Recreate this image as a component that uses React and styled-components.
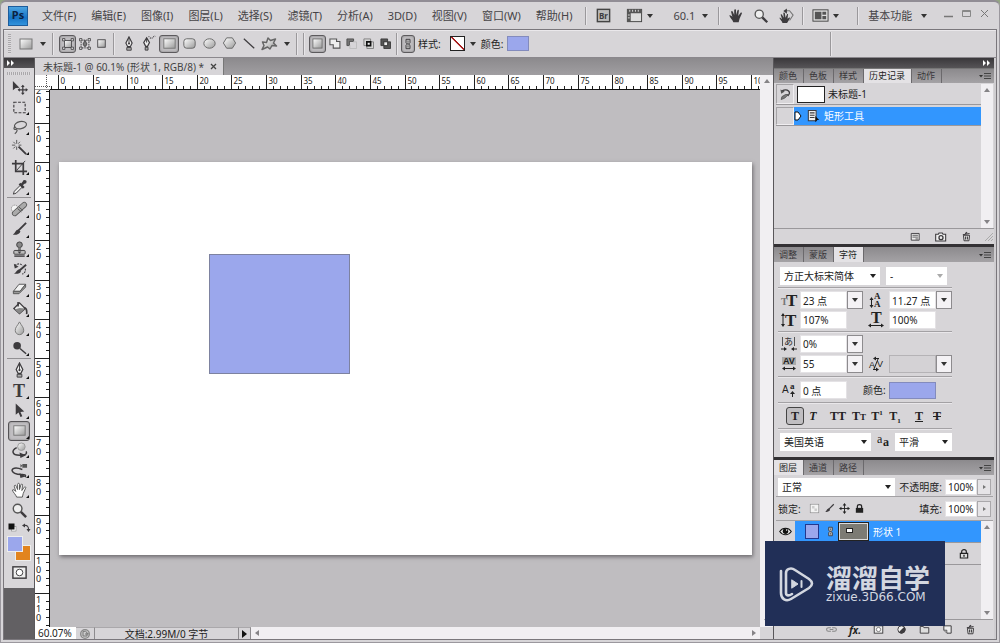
import React, { useEffect, useRef, useState } from 'react'
import styled, { createGlobalStyle, css } from 'styled-components'

const GlobalStyle = createGlobalStyle`
  *, *::before, *::after { box-sizing: border-box; }
  html, body, #root { height: 100%; }
  body {
    margin: 0;
    background: #93a682;
    color: #333;
    font-family: "Noto Sans", "Noto Sans CJK SC", sans-serif;
    font-size: 10px;
    line-height: 14px;
  }
  button, input, select { font: inherit; color: inherit; margin: 0; padding: 0; border: 0; border-radius: 0; }
  button { background: none; cursor: pointer; }
  svg { display: block; flex: none; }
`

/* ---------- icons ---------- */

const dark = '#3d3b3e'
const line = { fill: 'none', stroke: dark, strokeWidth: 1.2 }

const icons = {
  move: <><path d="M2 2v10l3-2.400 4-.4z" fill={dark} /><path d="M12.500 7v9M8 11.500h9" stroke={dark} strokeWidth="1.300" /><path d="M12.500 6l2 2.400h-4zM12.500 17l2-2.400h-4zM7 11.500l2.400-2v4zM18 11.500l-2.400-2v4z" fill={dark} /></>,
  marquee: <rect x="3" y="3.500" width="12" height="11" {...line} strokeDasharray="3 1.500" />,
  lasso: <><ellipse cx="10" cy="6.500" rx="6.500" ry="3.800" {...line} stroke="#555" transform="rotate(-12 10 6.500)" /><path d="M5 8.500c-2.500 0-2.500 3 0 2.600s1.500 3-1 4.400" {...line} stroke="#555" /></>,
  wand: <><path d="M8 8l8 8" stroke={dark} strokeWidth="2" /><path d="M6 1v4M6 8v3.500M1 6.500h3.500M8 6.500h3M2.500 3l2 2M9.500 3l-2 2M2.500 10l2-2" stroke="#555" /></>,
  crop: <><path d="M5 1v12h12M1 5h12v12" fill="none" stroke={dark} strokeWidth="1.800" /><path d="M6 12l9-10" stroke={dark} /></>,
  dropper: <><path d="M2.500 16l1-3 6.500-6.500 2 2L5.500 15z" fill="#eee" stroke={dark} /><path d="M9 5l4.500 4.500M10.500 7l4-4.500" stroke={dark} strokeWidth="2.600" /><circle cx="14.500" cy="3" r="2" fill={dark} /></>,
  heal: <><circle cx="4" cy="8" r="3.600" fill="#f5f5f5" stroke="#777" strokeDasharray="1 1" /><path d="M4 13L14 4" stroke="#555" strokeWidth="6" strokeLinecap="round" /><path d="M4 13L14 4" stroke="#aaa" strokeWidth="4.400" strokeLinecap="round" /><path d="M7 8l4 3.500M8.500 6.500l4 3.500" stroke="#555" /></>,
  brush: <><path d="M16 2L8 10" stroke={dark} strokeWidth="2" /><path d="M8 9c-3 0-3 3-6 5.500 4 .5 7-1 8-3.500z" fill={dark} /></>,
  stamp: <><circle cx="9" cy="4" r="3" fill="#888" stroke={dark} /><path d="M7.500 7h3v3h-3z" fill="#777" /><rect x="3" y="10" width="12" height="4" rx="1" fill="#bbb" stroke={dark} /><path d="M7 11h4l-2 2.500z" fill={dark} /><path d="M3.500 16h11" stroke={dark} strokeWidth="1.500" /></>,
  historyBrush: <><path d="M16 4L9 10" stroke={dark} strokeWidth="2" /><path d="M9 9c-3 0-3 3-6 4.500 4 .5 7-.5 7.500-2.500z" fill={dark} /><path d="M4 5c3-3 7-2 8 0M15 8c1 3-1 5-3 6" {...line} strokeDasharray="2 1" /><path d="M3 3l1 5 4-2z" fill={dark} /></>,
  eraser: <><path d="M2.500 12l6-7.500h7l-6 7.500z" fill="#f2f2f2" stroke="#555" /><path d="M2.500 12v2.500h6l7-7V4.500l-6 7.500z" fill="#999" stroke="#555" /></>,
  bucket: <><path d="M3 9l6-6 6 6-6 5.500z" fill="#e8e8e8" stroke={dark} strokeWidth="1.300" /><path d="M4 10l5-1.500 6 .5-6 5.500z" fill="#888" /><path d="M7.500 7V2M14 8c3 1 3 4 2.500 7" {...line} strokeWidth="1.700" /></>,
  blur: <path d="M9 2c2 4 4.500 5.500 4.500 9a4.500 4.500 0 0 1-9 0C4.500 7.500 7 6 9 2z" fill="url(#metal)" stroke="#777" />,
  dodge: <><circle cx="6.500" cy="6" r="4" fill={dark} /><path d="M9.500 9l6.500 5.500" stroke={dark} strokeWidth="1.500" /></>,
  pen: <><path d="M9 1l3.500 7-2 4h-3l-2-4z" fill="#eee" stroke={dark} strokeWidth="1.300" /><path d="M9 2v6" stroke={dark} /><circle cx="9" cy="8.500" r="1.200" fill={dark} /><path d="M6.500 13h5v3h-5z" fill="#aaa" stroke={dark} /></>,
  freePen: <><path d="M7 3l3 5-2 4H6L4 8z" fill="#eee" stroke={dark} strokeWidth="1.300" /><path d="M7 3v5" stroke={dark} /><path d="M5.500 13h3v3h-3z" fill="#aaa" stroke={dark} /><path d="M9 2c1-1 2 3 4 1s2-1 3-2" {...line} strokeDasharray="1 1" /></>,
  arrow: <path d="M5 1.500v12l3-2.500 2 5 2-1-2-4.500 4-.5z" fill={dark} />,
  rect: <rect x="3" y="4" width="12" height="10" fill="url(#metal)" stroke="#777" />,
  round: <rect x="3" y="4" width="12" height="10" rx="3" fill="url(#metal)" stroke="#666" />,
  ellipse: <ellipse cx="9" cy="9" rx="6" ry="5" fill="url(#metal)" stroke="#666" />,
  hex: <path d="M6 3h6l3.500 5.500L12 14H6L2.500 8.500z" fill="url(#metal)" stroke="#666" />,
  diagonal: <path d="M3 4l11 10" stroke={dark} strokeWidth="1.300" />,
  blob: <path d="M2 14.500l2-4L2.500 7l4 .5L8 3l2.500 2.500L15.500 4 13.500 8l3 3-4.500-.5-2 3.500-2.500-2z" fill="url(#metal)" stroke="#666" strokeWidth="1.500" strokeLinejoin="round" />,
  shapePath: <><rect x="4.500" y="4.500" width="9" height="9" fill="url(#metal)" stroke={dark} /><path d="M2 2h3v3H2zM13 2h3v3h-3zM2 13h3v3H2zM13 13h3v3h-3z" fill="#ddd" stroke={dark} /></>,
  pathOnly: <><path d="M4 4h10v10H4z" {...line} strokeDasharray="2 1" /><path d="M2 2h3v3H2zM13 2h3v3h-3zM2 13h3v3H2zM13 13h3v3h-3z" fill="#ddd" stroke={dark} /><path d="M9 4l2.500 5L10 12H8L6.500 9z" fill="#777" stroke={dark} /></>,
  pixels: <rect x="4.500" y="4.500" width="9" height="9" fill="url(#metal)" stroke={dark} />,
  combNew: <rect x="3.500" y="3.500" width="11" height="11" fill="url(#metal)" stroke="#666" />,
  combAdd: <path d="M3.500 3.500h8v3h4v8h-8v-4h-4z" fill="#eee" stroke="#555" strokeWidth="1.300" />,
  combSub: <><path d="M11.500 6.500v-3h-8v8h3v-5z" fill="#777" stroke="#444" /><path d="M11 7h4v8H7v-4" fill="none" stroke="#bbb" /></>,
  combInt: <><path d="M3.500 3.500h8v8h-8zM7 7h8v8H7z" fill="#d5d5d5" stroke="#777" /><path d="M7 7h4.500v4.500H7z" fill="#eee" stroke="#111" strokeWidth="2" /></>,
  combXor: <><path d="M3.500 3.500h8v8h-8zM7 7h8v8H7z" fill="#555" stroke="#333" /><path d="M7 7h4.500v4.500H7z" fill="#eee" stroke="#333" /></>,
  chain: <><path d="M6 2h6v5l-2 2 2 2v5H6v-5l2-2-2-2z" fill="#bbb" stroke={dark} strokeWidth="1.400" /><path d="M9 4v3M9 11v3M7 8l4 2" stroke={dark} /></>,
  orbit: <><path d="M6 6C0 9 1 14 9 14s8-2 7-4" {...line} strokeWidth="1.600" /><path d="M9 11l7 3-6 3z" fill={dark} /><circle cx="11" cy="5" r="4" fill="url(#metal)" stroke="#999" /></>,
  orbitCam: <><path d="M12 8C2 4-2 9 4 12s13-1 11 4" {...line} strokeWidth="1.600" /><path d="M9 12l7 3-6 2z" fill={dark} /><path d="M12 2h5v4h-5zM10 2l2 2-2 2z" fill="#555" /></>,
  hand: <path d="M6 16c-1-3-4-5-4.500-7.500C2 7.500 4 8.500 5 10L3.500 4.500c0-1.500 1.700-1.500 2 0L7 8V2.500c0-1.500 2-1.500 2 0V8l1.500-5c.5-1.500 2-1 1.700.5L11.500 9l2.500-3.500c1-1 2.200 0 1.500 1L13 12l-1 4z" fill="#fff" stroke="#555" />,
  handDark: <path d="M6 16c-1-3-4-5-4.500-7.500C2 7.500 4 8.500 5 10L3.500 4.500c0-1.500 1.700-1.500 2 0L7 8V2.500c0-1.500 2-1.500 2 0V8l1.500-5c.5-1.500 2-1 1.700.5L11.500 9l2.500-3.500c1-1 2.200 0 1.500 1L13 12l-1 4z" fill={dark} />,
  zoom: <><circle cx="7" cy="7" r="4.600" fill="#eee" stroke="#555" strokeWidth="1.500" /><path d="M10.500 10.500L16 16" stroke={dark} strokeWidth="2.600" /></>,
  rotate: <><path d="M5 17c0-2-3-4-3.500-6 1-.5 2 .5 3 1.500L3 7.500c.5-1 1.500-.5 1.500 0L6.500 11 6 5.500c.5-1 1.700-.5 1.700.5L8.500 11l1.700-4c.7-.7 1.500 0 1 1l-.5 4 1.500-1c1-.5 1.500 0 1 1l-3 5z" fill={dark} /><path d="M8 3h5l4 5-4 6" {...line} stroke="#777" /><path d="M6 3.500l4-3v6z" fill={dark} /></>,
  bridge: <><rect x="2.500" y="2.500" width="13" height="13" fill="#bbb" stroke="#444" strokeWidth="1.500" /><text x="9" y="12.500" fontSize="8.500" fontWeight="700" textAnchor="middle" fill={dark}>Br</text></>,
  screen: <><rect x="1.500" y="2.500" width="15" height="13" fill="#ddd" stroke="#444" /><path d="M1 2.500h16v4H1zM1 6h4v10H1z" fill="#555" /><path d="M4 3v2M7 3v2M10 3v2M13 3v2M2 8.500h2M2 11.500h2" stroke="#ddd" /></>,
  arrange: <><rect x="1" y="3" width="16" height="12" fill="#ddd" stroke="#444" /><path d="M3 5h7v8H3zM11 5h4v3.300h-4zM11 9.500h4V13h-4z" fill="#555" /></>,
  historySrc: <><path d="M4 4c8-4 14 2 8 7" {...line} strokeWidth="1.800" /><path d="M2 2l1 6 5-3z" fill="#555" /><path d="M13 9l-5 5-5 2 1-4 5-3z" fill="#777" stroke="#444" /></>,
  historyState: <><path d="M3 2h10v13H3z" fill="#eee" stroke={dark} strokeWidth="1.300" /><path d="M5 5h6M5 8h6M5 11h6" stroke={dark} strokeWidth="1.400" /><path d="M12 9l5 5h-2.500L12 17z" fill="#111" /></>,
  document: <><path d="M2 4h13v11H2z" fill="#eee" stroke={dark} strokeWidth="1.500" /><path d="M4 7h9M4 10h9M9 13h4" stroke={dark} strokeWidth="1.300" /></>,
  camera: <><path d="M1 5h4l1-2h5l1 2h4v10H1z" fill="#eee" stroke={dark} strokeWidth="1.600" /><circle cx="9" cy="10" r="3" {...line} strokeWidth="2" /></>,
  trash: <><path d="M4 7h10l-1 9H5z" fill="#ddd" stroke={dark} strokeWidth="1.600" /><path d="M3 6l11-2M7 4l3-2M7.500 9v5M10.500 9v5" stroke={dark} strokeWidth="1.700" /></>,
  fillLayer: <><circle cx="9" cy="9" r="6" fill="#eee" stroke={dark} strokeWidth="1.500" /><path d="M13.500 4.500a6 6 0 0 1-9 9z" fill={dark} /></>,
  mask: <><rect x="2" y="3" width="14" height="12" fill="#eee" stroke={dark} strokeWidth="1.500" /><circle cx="9" cy="9" r="3.500" fill="#fff" stroke={dark} /></>,
  folder: <path d="M2 4h5l1 2h8v9H2z" fill="#ddd" stroke={dark} strokeWidth="1.500" />,
  page: <><path d="M3 3h12v12H8L3 10z" fill="#eee" stroke={dark} strokeWidth="1.600" /><path d="M3 10h5v5" fill="#aaa" stroke={dark} /></>,
  links: <path d="M8 6H4a3 3 0 0 0 0 6h4M10 6h4a3 3 0 0 1 0 6h-4M6 9h6" {...line} stroke="#888" strokeWidth="1.700" />,
  lock: <><path d="M3.500 8h11v7h-11z" fill="#ddd" stroke="#222" strokeWidth="1.700" /><path d="M5.500 8V5.500c0-4 7-4 7 0V8" {...line} stroke="#222" strokeWidth="1.800" /><path d="M9 10v3" stroke="#222" strokeWidth="2" /></>,
  lockDark: <><path d="M3 8h12v8H3z" fill="#222" /><path d="M5.500 8V5.500c0-4 7-4 7 0V8" {...line} stroke="#222" strokeWidth="2" /></>,
  checker: <><rect x="2" y="2" width="14" height="14" fill="#f3f3f3" stroke="#888" /><path d="M5 5h4v4H5zM9 9h4v4H9z" fill="#ccc" /></>,
  moveAll: <><path d="M9 2v14M2 9h14" stroke="#222" strokeWidth="1.500" /><path d="M9 0l3 4H6zM9 18l3-4H6zM0 9l4-3v6zM18 9l-4-3v6z" fill="#222" /></>,
  eye: <><path d="M1 9c4-6 12-6 16 0-4 6-12 6-16 0z" fill="#eee" stroke="#111" strokeWidth="1.500" /><circle cx="9" cy="8.500" r="3.800" fill="#111" /><circle cx="10.500" cy="7" r="1" fill="#fff" /></>,
  clock: <><circle cx="9" cy="9" r="6.500" fill="#ccc" stroke="#888" strokeWidth="2" /><path d="M6 5h4l2 2v5H6zM9 9h5l-2-2" fill="none" stroke="#777" strokeWidth="1.500" /></>,
  swap: <><path d="M5 5c5-1 8 2 8 7" {...line} strokeWidth="2.200" /><path d="M0 5l6-4v8zM13 18l-4-6h8z" fill={dark} /></>,
  chars: <><rect x="7" y="7" width="9" height="9" fill="#fff" stroke="#777" /><rect x="1" y="1" width="12" height="12" fill="#111" /></>,
}

const Icon = ({ name, size = 18 }) => (
  <svg width={size} height={size} viewBox="0 0 18 18" aria-hidden="true">{icons[name]}</svg>
)

const HiddenSvg = styled.svg`
  position: absolute;
`

const Defs = () => (
  <HiddenSvg width="0" height="0" aria-hidden="true">
    <linearGradient id="metal" x1="0" y1="0" x2="1" y2="1">
      <stop offset="0" stopColor="#fff" />
      <stop offset="1" stopColor="#999" />
    </linearGradient>
  </HiddenSvg>
)

/* ---------- window ---------- */

const Window = styled.div`
  position: relative;
  display: flex;
  flex-direction: column;
  min-height: 100vh;
  padding: 0 2px 2px 2px;
  border: 1px solid #9b989e;
  border-top: 2px solid #918d95;
  border-radius: 6px 6px 0 0;
  background: #d7d5d8;
`

const Row = styled.div`
  display: flex;
  align-items: center;
`

const Spacer = styled.div`
  flex: 1;
`

const Caret = styled.span`
  flex: none;
  width: 0;
  height: 0;
  border: 3px solid transparent;
  border-top: 4px solid #333;
  border-bottom: 0;
`

const Divider = styled.span`
  flex: none;
  width: 2px;
  height: ${p => p.h || 18}px;
  border-left: 1px solid #9a989b;
  border-right: 1px solid #e8e6e9;
`

const MenuBar = styled.header`
  display: flex;
  align-items: center;
  height: 27px;
  padding: 0 7px 0 5px;
  font-size: 11px;
  color: #454346;
  white-space: nowrap;
`

const Logo = styled.div`
  width: 20px;
  height: 20px;
  margin-right: 14px;
  border: 1px solid #1c5c9c;
  background: linear-gradient(#4ba3e0, #1773c4 60%, #3293dc);
  color: #0a2142;
  font-size: 11px;
  font-weight: 700;
  line-height: 16px;
  text-align: center;
`

const Menu = styled.nav`
  display: flex;
  gap: 15px;
`

const IconButton = styled.button`
  display: flex;
  align-items: center;
  justify-content: center;
  flex: none;
  gap: 4px;
  min-width: ${p => p.w || 18}px;
  height: ${p => p.h || 18}px;
  border: 1px solid transparent;
  border-radius: 3px;
  ${p => p.$on && css`
    border-color: #5c5a5d;
    background: #bebcbf;
    box-shadow: inset 0 0 2px #777;
  `}
`

const MenuTools = styled.div`
  display: flex;
  align-items: center;
  gap: ${p => p.gap || 7}px;
  margin-left: ${p => p.ml || 10}px;
`

const WinButtons = styled.div`
  display: flex;
  gap: 7px;
  margin-left: auto;
  padding-bottom: 4px;
`

const OptionsBar = styled.div`
  display: flex;
  align-items: center;
  height: 29px;
  padding: 0 0 0 4px;
  border: 1px solid #7a777c;
  border-bottom-color: #8b888d;
  box-shadow: inset 0 1px #eae8eb;
  color: #222;
`

const Grip = styled.span`
  width: ${p => (p.wide ? 24 : 3)}px;
  height: ${p => (p.wide ? 3 : 20)}px;
  background: repeating-linear-gradient(${p => (p.wide ? '90deg' : '180deg')}, #aaa8ab 0 1px, #dddbde 1px 2px);
`

const Group = styled.div`
  display: flex;
  align-items: center;
  gap: ${p => p.gap || 0}px;
  margin-left: ${p => p.ml || 0}px;
`

const ColorButton = styled.button`
  width: ${p => p.w}px;
  height: ${p => p.h}px;
  border: 1px solid #838bbd;
  background: #9ba7ec;
`

const NoStyle = styled.button`
  width: 15px;
  height: 15px;
  margin: 0 5px 0 9px;
  border: 1px solid #222;
  background: linear-gradient(to top right, #fff 46%, #a92020 47%, #a92020 54%, #fff 55%);
`

const Workspace = styled.main`
  display: flex;
  flex: 1;
  border: 1px solid #7a777c;
  border-top: 0;
`

/* ---------- toolbox ---------- */

const Toolbox = styled.aside`
  display: flex;
  flex-direction: column;
  width: 31px;
  border-right: 1px solid #5b595c;
  background: #626063;
`

const DarkHead = styled.div`
  flex: none;
  display: flex;
  align-items: center;
  justify-content: ${p => (p.right ? 'flex-end' : 'flex-start')};
  height: 10px;
  padding: 0 3px;
  background: linear-gradient(#3a383b, #565457);
`

const ToolPanel = styled.div`
  display: flex;
  flex-direction: column;
  align-items: center;
  padding: 4px 3px 5px;
  background: #d8d6d9;
`

const ToolGroup = styled.div`
  display: grid;
  grid-auto-rows: 1fr;
  height: ${p => p.h}px;
  margin: 2px 0 0;
`

const Tool = styled.button`
  position: relative;
  display: flex;
  align-items: center;
  justify-content: center;
  width: 22px;
  border: 1px solid transparent;
  border-radius: 3px;
  ${p => p.$on && css`
    border-color: #555356;
    background: #c0bec1;
    box-shadow: inset 0 0 2px #777;
  `}
  ${p => p.$more && css`
    &::after {
      content: '';
      position: absolute;
      right: 0;
      bottom: 1px;
      border-left: 3px solid transparent;
      border-bottom: 3px solid #111;
    }
  `}
`

const ToolRule = styled.hr`
  width: 24px;
  margin: 0;
  border: 0;
  border-top: 1px solid #929093;
`

const SwapRow = styled.div`
  display: flex;
  justify-content: space-between;
  width: 23px;
  margin: 3px 0 4px;
`

const Swatches = styled.div`
  position: relative;
  width: 24px;
  height: 25px;
`

const Swatch = styled.button`
  position: absolute;
  width: 16px;
  height: 16px;
  border: 1px solid #eee;
  ${p => (p.$back ? 'right: 0; bottom: 0; background: #e2841f;' : 'left: 0; top: 0; z-index: 1; background: #9ba7ec;')}
`

/* ---------- document ---------- */

const Doc = styled.section`
  display: flex;
  flex-direction: column;
  flex: 1;
  min-width: 0;
`

const DocTabs = styled.div`
  display: flex;
  height: 17px;
  background: linear-gradient(#8c8a8d, #a09ea1);
`

const DocTab = styled.div`
  display: flex;
  align-items: center;
  gap: 6px;
  padding: 0 6px 0 8px;
  border-right: 1px solid #777;
  background: #d7d5d8;
  color: #444;
  white-space: nowrap;
`

const Stage = styled.div`
  display: grid;
  grid-template: 15px 1fr 12px / 15px minmax(0, 1fr) 13px;
  flex: 1;
`

const Corner = styled.div`
  background:
    repeating-linear-gradient(90deg, #555 0 1px, #fff 1px 2px) 0 11px / 100% 1px no-repeat,
    repeating-linear-gradient(#555 0 1px, #fff 1px 2px) 11px 0 / 1px 100% no-repeat,
    #fff;
  border-bottom: 1px solid #999;
`

const RulerBox = styled.div`
  position: relative;
  overflow: hidden;
  background: #fff;
  ${p => (p.$vertical ? 'border-right: 1px solid #111;' : 'border-bottom: 1px solid #111;')}
  svg { position: absolute; left: 0; top: 0; overflow: hidden; }
`

const Canvas = styled.div`
  display: flex;
  padding: 72px 8px 72px 9px;
  background: #bfbdc0;
`

const Artboard = styled.div`
  position: relative;
  flex: 1;
  background: #fff;
  box-shadow: 1px 2px 4px #6d6b6e;
`

const Shape = styled.div`
  position: absolute;
  left: 21.6%;
  top: 23.5%;
  width: 20.4%;
  height: 30.4%;
  border: 1px solid #7d82a0;
  background: #9ba7ec;
`

const Scroll = styled.div`
  display: flex;
  flex-direction: ${p => (p.$horizontal ? 'row' : 'column')};
  justify-content: space-between;
  align-items: center;
  padding: ${p => (p.$horizontal ? '0 4px' : '4px 0')};
  background: #f1eff2;
`

const ScrollArrow = styled.button`
  width: 0;
  height: 0;
  border: 3px solid transparent;
  ${p => ({
    up: 'border-bottom: 4px solid #858386; border-top: 0;',
    down: 'border-top: 4px solid #858386; border-bottom: 0;',
    left: 'border-right: 4px solid #858386; border-left: 0;',
    right: 'border-left: 4px solid #858386; border-right: 0;',
  })[p.$dir]}
`

const ScrollBar = ({ horizontal, className }) => (
  <Scroll $horizontal={horizontal} className={className}>
    <ScrollArrow $dir={horizontal ? 'left' : 'up'} aria-label="向前滚动" />
    <ScrollArrow $dir={horizontal ? 'right' : 'down'} aria-label="向后滚动" />
  </Scroll>
)

const DocScroll = styled(ScrollBar)`
  grid-row: 1 / 3;
  grid-column: 3;
`

const StatusBar = styled.footer`
  grid-column: 1 / -1;
  display: flex;
  align-items: stretch;
  line-height: 12px;
  color: #222;
`

const ZoomField = styled.input`
  width: 41px;
  padding: 0 3px;
  background: #fff;
`

const StatusCell = styled.div`
  display: flex;
  align-items: center;
  justify-content: center;
  width: ${p => p.w}px;
  border-right: 1px solid #8d8b8e;
  border-top: 1px solid #aaa8ab;
  white-space: nowrap;
`

const StatusScroll = styled.div`
  flex: 1;
  display: grid;
  margin-right: 13px;
`

const PlayArrow = styled.button`
  width: 0;
  height: 0;
  border: 4px solid transparent;
  border-left: 5px solid #111;
  border-right: 0;
`

function useSize() {
  const ref = useRef(null)
  const [size, setSize] = useState({ width: 0, height: 0 })
  useEffect(() => {
    const measure = () => setSize({ width: ref.current.clientWidth, height: ref.current.clientHeight })
    measure()
    window.addEventListener('resize', measure)
    return () => window.removeEventListener('resize', measure)
  }, [])
  return [ref, size]
}

function HorizontalRuler() {
  const [ref, { width }] = useSize()
  const step = 34.65 / 5
  const ticks = Array.from({ length: Math.max(0, Math.ceil((width - 8) / step) + 1) }, (_, i) => i - 1)
  return (
    <RulerBox ref={ref}>
      <svg width="100%" height="15" shapeRendering="crispEdges">
        {ticks.map(n => {
          const x = Math.round(8 + n * step) + 0.5
          const major = n % 5 === 0
          return (
            <g key={n}>
              <path d={`M${x} ${major ? 0 : 11}V15`} stroke="#222" />
              {major && <text x={x + 2} y="9" fontSize="8" fill="#222">{n}</text>}
            </g>
          )
        })}
      </svg>
    </RulerBox>
  )
}

function VerticalRuler() {
  const [ref, { height }] = useSize()
  const step = 39.2 / 5
  const ticks = Array.from({ length: Math.max(0, Math.floor((height - 72) / step) + 11) }, (_, i) => i - 10)
  return (
    <RulerBox $vertical ref={ref}>
      <svg width="15" height="100%" shapeRendering="crispEdges">
        {ticks.map(n => {
          const y = Math.round(72 + n * step) + 0.5
          const major = n % 5 === 0
          return (
            <g key={n}>
              <path d={`M${major ? 0 : 11} ${y}H15`} stroke="#222" />
              {major && String(Math.abs(n * 2)).split('').map((d, i) => (
                <text key={i} x="1" y={y + 9 + i * 9} fontSize="9" fill="#222">{d}</text>
              ))}
            </g>
          )
        })}
      </svg>
    </RulerBox>
  )
}

/* ---------- panels ---------- */

const Dock = styled.aside`
  display: flex;
  flex-direction: column;
  width: 223px;
  border-left: 1px solid #59575a;
  border-right: 2px solid #cfcdd0;
  color: #222;
`

const TabStrip = styled.div`
  display: flex;
  align-items: stretch;
  height: 15px;
  padding-right: 3px;
  border-top: ${p => (p.$split ? '0' : '1px solid #777')};
  background: linear-gradient(#8c8a8d, #a4a2a5);
`

const Tab = styled.button`
  padding: 0 6px 0 5px;
  border-right: 1px solid #6b696c;
  font-size: 9px;
  line-height: 12px;
  color: #39373a;
  ${p => p.$active && 'background: #e4e2e5; color: #222;'}
`

const PanelMenu = styled.button`
  margin-left: auto;
`

const Split = styled.div`
  height: 3px;
  background: #333134;
`

const Panel = ({ tabs, initial, split, children }) => {
  const [active, setActive] = useState(initial)
  return (
    <>
      {split && <Split />}
      <TabStrip $split={split} role="tablist">
        {tabs.map(t => (
          <Tab key={t} role="tab" $active={t === active} aria-selected={t === active} onClick={() => setActive(t)}>{t}</Tab>
        ))}
        <PanelMenu aria-label="面板菜单">
          <svg width="12" height="8" viewBox="0 0 12 8"><path d="M0 3h4L2 5.500z" fill="#333" /><path d="M5 1.500h7M5 4h7M5 6.500h7" stroke="#444" /></svg>
        </PanelMenu>
      </TabStrip>
      {children}
    </>
  )
}

const HistoryBody = styled.div`
  display: grid;
  grid-template-columns: 1fr 12px;
  height: 145px;
  padding: 1px 1px 0 2px;
`

const HistoryRow = styled.div`
  display: flex;
  align-items: center;
  height: ${p => (p.$selected ? 19 : 21)}px;
  margin-top: ${p => (p.$selected ? 2 : 0)}px;
  border-bottom: 1px solid #9a989b;
  ${p => p.$selected && 'background: #3296fe; color: #fff;'}
`

const SourceBox = styled.button`
  display: flex;
  align-items: center;
  justify-content: center;
  align-self: stretch;
  width: 18px;
  border: 1px solid #a5a3a6;
  border-right-color: #f0eef1;
  border-bottom-color: #f0eef1;
  background: #d7d5d8;
`

const Snapshot = styled.span`
  width: 28px;
  height: 17px;
  margin: 0 3px;
  border: 1px solid #222;
  background: #fff;
`

const PanelFoot = styled.div`
  display: flex;
  align-items: center;
  justify-content: flex-end;
  gap: ${p => p.gap}px;
  height: ${p => p.h}px;
  padding-right: ${p => p.pr}px;
  border-top: 1px solid #9a989b;
`

const CharBody = styled.div`
  width: 178px;
  height: 195px;
  padding: 5px 0 0 4px;
`

const Rule = styled.hr`
  margin: ${p => (p.$tight ? 2 : 3)}px 0;
  border: 0;
  border-top: 1px solid #a3a1a4;
  border-bottom: 1px solid #e9e7ea;
`

const Fields = styled.div`
  display: grid;
  grid-template-columns: 22px 63px 26px 63px;
  align-items: center;
  row-gap: 2px;
`

const FieldIcon = styled.span`
  display: flex;
  justify-content: center;
`

const Combo = styled.div`
  display: flex;
  height: 18px;
`

const TextBox = styled.input`
  width: ${p => p.$w || 47}px;
  height: ${p => p.$h || 18}px;
  padding: 0 2px;
  border: 1px solid #e4e2e5;
  background: ${p => (p.disabled ? '#d4d2d5' : '#fff')};
  ${p => p.disabled && 'border-color: #b5b3b6;'}
`

const DropButton = styled.button`
  display: flex;
  align-items: center;
  justify-content: center;
  width: 16px;
  border: 1px solid #8d8b8e;
  background: #f4f2f5;
`

const SelectBox = styled.span`
  position: relative;
  display: block;
  flex: none;
  width: ${p => p.$w}px;
  &::after {
    content: '';
    position: absolute;
    right: 4px;
    top: 7px;
    border: 3px solid transparent;
    border-top: 4px solid ${p => (p.$faint ? '#aaa' : '#222')};
    border-bottom: 0;
    pointer-events: none;
  }
`

const Select = styled.select`
  appearance: none;
  width: 100%;
  height: 18px;
  padding: 0 4px;
  background: #fff;
`

const Drop = ({ w, label, children, faint }) => (
  <SelectBox $w={w} $faint={faint}>
    <Select aria-label={label}><option>{children}</option></Select>
  </SelectBox>
)

const StyleButton = styled.button`
  width: ${p => p.$w || 18}px;
  height: 18px;
  border: 1px solid ${p => (p.$on ? '#444' : 'transparent')};
  border-radius: 3px;
  background: ${p => (p.$on ? '#c0bec1' : 'none')};
  font-family: "Liberation Serif", serif;
  font-size: 12px;
  font-weight: 700;
  line-height: 14px;
  text-align: center;
  small { font-size: 9px; }
  sup, sub { font-size: 7px; line-height: 0; }
`

const GlyphIcon = ({ label, children }) => (
  <FieldIcon title={label}>
    <svg width="18" height="16" viewBox="0 0 18 16" fontFamily="Liberation Serif, serif" fontWeight="700" fill="#222">{children}</svg>
  </FieldIcon>
)

const Field = ({ label, value, drop, disabled }) => (
  <Combo>
    <TextBox aria-label={label} defaultValue={value} disabled={disabled} />
    {drop && <DropButton aria-label={label}><Caret /></DropButton>}
  </Combo>
)

const LayerBody = styled.div`
  display: flex;
  flex-direction: column;
  flex: 1;
  padding: 3px 1px 0 2px;
`

const LayerOptions = styled.div`
  display: flex;
  align-items: center;
  gap: 2px;
  height: ${p => p.h}px;
  padding: 0 2px;
  border-bottom: 1px solid #a3a1a4;
  white-space: nowrap;
  label { margin: 0 1px 0 auto; }
`

const Stepper = styled.button`
  display: flex;
  align-items: center;
  justify-content: center;
  width: 14px;
  height: 16px;
  margin-left: -2px;
  border: 1px solid #aaa8ab;
  background: #e6e4e7;
  &::after {
    content: '';
    border: 2px solid transparent;
    border-left: 3px solid #777;
    border-right: 0;
  }
`

const LayerList = styled.div`
  display: grid;
  grid-template-columns: 1fr 12px;
  flex: 1;
`

const LayerRow = styled.div`
  display: flex;
  align-items: center;
  height: 22px;
  border-bottom: 1px solid #9a989b;
  ${p => p.$selected && 'background: #3296fe; color: #fff;'}
`

const EyeCell = styled.button`
  display: flex;
  align-items: center;
  justify-content: center;
  align-self: stretch;
  width: 19px;
  background: #d7d5d8;
`

const LayerColor = styled.span`
  width: 14px;
  height: 15px;
  margin: 0 6px 0 10px;
  border: 1px solid #22388f;
  background: #9ba7ec;
`

const MaskThumb = styled.span`
  display: flex;
  width: 31px;
  height: 19px;
  margin: 0 4px 0 2px;
  padding: 4px 6px;
  border: 2px solid #222;
  outline: 1px solid #ddd;
  outline-offset: -2px;
  background: #7c7b74;
  &::before {
    content: '';
    width: 7px;
    height: 5px;
    border: 1px solid #222;
    background: #fff;
  }
`

const LockCell = styled.span`
  margin: 0 11px 0 auto;
`

/* ---------- watermark ---------- */

const Badge = styled.div`
  position: absolute;
  right: 54px;
  bottom: 16px;
  display: flex;
  align-items: center;
  gap: 12px;
  width: 180px;
  height: 85px;
  padding-left: 13px;
  background: #212f57;
  color: #d3d7e0;
`

const BadgeName = styled.div`
  font-family: "Noto Sans CJK SC", sans-serif;
  font-size: 26px;
  font-weight: 700;
  line-height: 26px;
`

const BadgeUrl = styled.div`
  font-family: "DejaVu Sans", sans-serif;
  font-size: 12px;
  line-height: 14px;
`

const menus = ['文件(F)', '编辑(E)', '图像(I)', '图层(L)', '选择(S)', '滤镜(T)', '分析(A)', '3D(D)', '视图(V)', '窗口(W)', '帮助(H)']

const toolGroups = [
  { h: 120, tools: ['move', 'marquee', 'lasso', 'wand', 'crop', 'dropper'] },
  { h: 158, tools: ['heal', 'brush', 'stamp', 'historyBrush', 'eraser', 'bucket', 'blur', 'dodge'] },
  { h: 159, tools: ['pen', 'type', 'arrow', 'rect', 'orbit', 'orbitCam', 'hand', 'zoom'] },
]

const TypeGlyph = styled.span`
  font-family: "Liberation Serif", serif;
  font-size: 18px;
  font-weight: 700;
  line-height: 18px;
  color: #3d3b3e;
`

function TopMenu() {
  return (
    <MenuBar>
      <Logo>Ps</Logo>
      <Menu>{menus.map(m => <span key={m}>{m}</span>)}</Menu>
      <MenuTools ml={12}>
        <Divider />
        <IconButton aria-label="Bridge"><Icon name="bridge" size={17} /></IconButton>
      </MenuTools>
      <MenuTools ml={12}>
        <IconButton aria-label="屏幕"><Icon name="screen" size={17} /><Caret /></IconButton>
      </MenuTools>
      <MenuTools ml={20}><span>60.1</span><Caret /></MenuTools>
      <MenuTools ml={10}>
        <Divider />
        <IconButton aria-label="抓手"><Icon name="handDark" size={16} /></IconButton>
        <IconButton aria-label="缩放"><Icon name="zoom" size={16} /></IconButton>
        <IconButton aria-label="旋转"><Icon name="rotate" size={16} /></IconButton>
        <Divider />
        <IconButton aria-label="排列"><Icon name="arrange" size={17} /><Caret /></IconButton>
      </MenuTools>
      <MenuTools ml={17} gap={9}><Divider /><span>基本功能</span><Caret /></MenuTools>
      <WinButtons>
        <IconButton w={10} h={12} aria-label="最小化"><svg width="9" height="9"><path d="M0 7.500h9" stroke="#777" strokeWidth="1.500" /></svg></IconButton>
        <IconButton w={10} h={12} aria-label="最大化"><svg width="9" height="9"><path d="M.5 1.500h8v6h-8zM.5 2.500h8" fill="none" stroke="#888" /></svg></IconButton>
        <IconButton w={10} h={12} aria-label="关闭"><svg width="9" height="9"><path d="M1 1l7 7M8 1l-7 7" stroke="#777" /></svg></IconButton>
      </WinButtons>
    </MenuBar>
  )
}

function Options() {
  return (
    <OptionsBar>
      <Grip />
      <Group ml={5} gap={4}>
        <IconButton aria-label="形状"><Icon name="rect" /></IconButton><Caret />
      </Group>
      <Group ml={6}><Divider h={22} /></Group>
      <Group ml={5}>
        <IconButton w={17} $on aria-label="形状图层"><Icon name="shapePath" size={14} /></IconButton>
        <IconButton w={17} aria-label="路径"><Icon name="pathOnly" size={14} /></IconButton>
        <IconButton w={17} aria-label="填充像素"><Icon name="pixels" size={15} /></IconButton>
      </Group>
      <Group ml={3}><Divider h={22} /></Group>
      <Group ml={5}>
        <IconButton w={18} aria-label="钢笔"><Icon name="pen" size={16} /></IconButton>
        <IconButton w={21} aria-label="自由钢笔"><Icon name="freePen" size={17} /></IconButton>
        <IconButton w={20} $on aria-label="矩形"><Icon name="rect" size={17} /></IconButton>
        <IconButton w={20} aria-label="圆角矩形"><Icon name="round" size={17} /></IconButton>
        <IconButton w={20} aria-label="椭圆"><Icon name="ellipse" size={17} /></IconButton>
        <IconButton w={20} aria-label="多边形"><Icon name="hex" size={17} /></IconButton>
        <IconButton w={20} aria-label="直线"><Icon name="diagonal" size={17} /></IconButton>
        <IconButton w={20} aria-label="自定形状"><Icon name="blob" size={18} /></IconButton>
      </Group>
      <Group ml={5}><Caret /></Group>
      <Group ml={6} gap={5}><Divider h={22} /><Divider h={22} /></Group>
      <Group ml={4}>
        <IconButton w={17} $on aria-label="创建新的"><Icon name="combNew" size={15} /></IconButton>
        <IconButton w={17} aria-label="添加"><Icon name="combAdd" size={15} /></IconButton>
        <IconButton w={17} aria-label="减去"><Icon name="combSub" size={15} /></IconButton>
        <IconButton w={17} aria-label="交叉"><Icon name="combInt" size={15} /></IconButton>
        <IconButton w={17} aria-label="重叠"><Icon name="combXor" size={15} /></IconButton>
      </Group>
      <Group ml={2}><Divider h={22} /></Group>
      <Group ml={3}>
        <IconButton w={14} $on aria-label="链接"><Icon name="chain" size={12} /></IconButton>
      </Group>
      <Group ml={3}>样式:<NoStyle aria-label="样式" /><Caret /></Group>
      <Group ml={5} gap={4}>颜色:<ColorButton w={22} h={15} aria-label="颜色" /></Group>
      <Spacer />
      <Divider h={24} />
      <Group ml={164} />
    </OptionsBar>
  )
}

function Tools() {
  const [current, setCurrent] = useState('rect')
  return (
    <Toolbox>
      <DarkHead><svg width="8" height="6"><path d="M0 0l3 3-3 3zM4 0l3 3-3 3z" fill="#fff" /></svg></DarkHead>
      <ToolPanel>
        <Grip wide />
        {toolGroups.map((g, i) => (
          <React.Fragment key={g.h}>
            {i > 0 && <ToolRule />}
            <ToolGroup h={g.h}>
              {g.tools.map(t => (
                <Tool key={t} $on={t === current} $more={t !== 'move' && t !== 'zoom'} aria-label={t} onClick={() => setCurrent(t)}>
                  {t === 'type' ? <TypeGlyph>T</TypeGlyph> : <Icon name={t} size={17} />}
                </Tool>
              ))}
            </ToolGroup>
          </React.Fragment>
        ))}
        <SwapRow>
          <Icon name="chars" size={9} />
          <Icon name="swap" size={9} />
        </SwapRow>
        <Swatches>
          <Swatch aria-label="前景色" />
          <Swatch $back aria-label="背景色" />
        </Swatches>
        <IconButton h={22} aria-label="快速蒙版"><Icon name="mask" size={17} /></IconButton>
      </ToolPanel>
    </Toolbox>
  )
}

function DocumentView() {
  return (
    <Doc>
      <DocTabs>
        <DocTab>
          未标题-1 @ 60.1% (形状 1, RGB/8) *
          <svg width="7" height="7"><path d="M1 1l5 5M6 1L1 6" stroke="#444" strokeWidth="1.300" /></svg>
        </DocTab>
      </DocTabs>
      <Stage>
        <Corner />
        <HorizontalRuler />
        <DocScroll />
        <VerticalRuler />
        <Canvas>
          <Artboard><Shape /></Artboard>
        </Canvas>
        <StatusBar>
          <ZoomField aria-label="缩放比例" defaultValue="60.07%" />
          <StatusCell w={19}><Icon name="clock" size={12} /></StatusCell>
          <StatusCell w={144}>文档:2.99M/0 字节</StatusCell>
          <StatusCell w={12}><PlayArrow aria-label="状态选项" /></StatusCell>
          <StatusScroll><ScrollBar horizontal /></StatusScroll>
        </StatusBar>
      </Stage>
    </Doc>
  )
}

function HistoryPanel() {
  return (
    <Panel tabs={['颜色', '色板', '样式', '历史记录', '动作']} initial="历史记录">
      <HistoryBody>
        <div>
          <HistoryRow>
            <SourceBox aria-label="历史源"><Icon name="historySrc" size={13} /></SourceBox>
            <Snapshot />
            未标题-1
          </HistoryRow>
          <HistoryRow $selected>
            <SourceBox aria-label="历史源" />
            <svg width="8" height="10"><path d="M1 1h3l3 4-3 4H1z" fill="#fff" stroke="#111" /></svg>
            <Group ml={4} gap={4}><Icon name="historyState" size={14} />矩形工具</Group>
          </HistoryRow>
        </div>
        <ScrollBar />
      </HistoryBody>
      <PanelFoot h={16} gap={12} pr={1}>
        <IconButton w={13} h={14} aria-label="新文档"><Icon name="document" size={11} /></IconButton>
        <IconButton w={13} h={14} aria-label="新快照"><Icon name="camera" size={12} /></IconButton>
        <IconButton w={13} h={14} aria-label="删除"><Icon name="trash" size={11} /></IconButton>
        <svg width="8" height="8"><path d="M0 8l8-8M3 8l5-5M6 8l2-2" stroke="#aaa" /></svg>
      </PanelFoot>
    </Panel>
  )
}

function CharacterPanel() {
  return (
    <Panel split tabs={['调整', '蒙版', '字符']} initial="字符">
      <CharBody>
        <Row>
          <Group ml={2} gap={6}>
            <Drop w={100} label="字体">方正大标宋简体</Drop>
            <Drop w={61} label="字形" faint>-</Drop>
          </Group>
        </Row>
        <Rule $tight />
        <Fields>
          <GlyphIcon label="字号"><text x="1" y="13" fontSize="10" fill="#777">T</text><text x="6" y="14" fontSize="17">T</text></GlyphIcon>
          <Field label="字号" value="23 点" drop />
          <GlyphIcon label="行距"><text x="7" y="7" fontSize="9">A</text><text x="7" y="15" fontSize="9">A</text><path d="M4.500 7v8" stroke="#222" /><path d="M2.500 8l2-3 2 3zM2.500 13l2 3 2-3z" /></GlyphIcon>
          <Field label="行距" value="11.27 点" drop />
          <GlyphIcon label="垂直缩放"><text x="5" y="14" fontSize="17">T</text><path d="M3 3v10" stroke="#222" /><path d="M1 4l2-3 2 3zM1 12l2 3 2-3z" /></GlyphIcon>
          <Field label="垂直缩放" value="107%" />
          <GlyphIcon label="水平缩放"><text x="4" y="11" fontSize="16">T</text><path d="M3 13.500h12" stroke="#222" /><path d="M4 11.500l-3 2 3 2zM14 11.500l3 2-3 2z" /></GlyphIcon>
          <Field label="水平缩放" value="100%" />
        </Fields>
        <Rule $tight />
        <Fields>
          <GlyphIcon label="比例间距"><text x="4" y="9" fontSize="9" fontFamily="Noto Sans CJK JP" fontWeight="400">あ</text><path d="M2.500 1v9M14.500 1v9" stroke="#555" /><path d="M1 13h4M17 13h-4" stroke="#222" /><path d="M4 11l3 2-3 2zM14 11l-3 2 3 2z" /></GlyphIcon>
          <Field label="比例间距" value="0%" drop />
          <span /><span />
          <GlyphIcon label="字距"><path d="M2 1h14v8H2z" fill="#aaa" /><text x="3" y="8" fontSize="9" fontFamily="Liberation Sans">AV</text><path d="M4 12.500h10" stroke="#222" /><path d="M5 10.500l-3 2 3 2zM13 10.500l3 2-3 2z" /></GlyphIcon>
          <Field label="字距" value="55" drop />
          <GlyphIcon label="字偶间距"><text x="2" y="12" fontSize="9" fontFamily="Liberation Sans" fontWeight="400">A</text><text x="10" y="11" fontSize="9" fontFamily="Liberation Sans" fontWeight="400">V</text><path d="M11 3L7 13M8 2.500h4M6 13.500h4" fill="none" stroke="#222" /><path d="M9 .5v4l-3-2zM9 11.500v4l3-2z" /></GlyphIcon>
          <Field label="字偶间距" value="" drop disabled />
        </Fields>
        <Rule />
        <Fields>
          <GlyphIcon label="基线"><text x="2" y="11" fontSize="10" fontFamily="Liberation Sans" fontWeight="400">A</text><text x="10" y="7" fontSize="9">a</text><path d="M12.500 10v5" stroke="#222" /><path d="M10 12l2.500-3 2.500 3z" /></GlyphIcon>
          <Field label="基线" value="0 点" />
          <span>颜色:</span>
          <ColorButton w={47} h={17} aria-label="文字颜色" />
        </Fields>
        <Rule />
        <Row>
          <Group ml={8}>
            <StyleButton $on aria-pressed="true">T</StyleButton>
            <StyleButton><i>T</i></StyleButton>
          </Group>
          <Group ml={4}>
            <StyleButton $w={24}>TT</StyleButton>
            <StyleButton>T<small>T</small></StyleButton>
            <StyleButton>T<sup>1</sup></StyleButton>
            <StyleButton>T<sub>1</sub></StyleButton>
          </Group>
          <Group ml={6}>
            <StyleButton><u>T</u></StyleButton>
            <StyleButton><s>T</s></StyleButton>
          </Group>
        </Row>
        <Rule />
        <Row>
          <Group ml={2} gap={6}>
            <Drop w={91} label="语言">美国英语</Drop>
            <svg width="12" height="14" fontFamily="Liberation Serif, serif"><text x="0" y="8" fontSize="12" fill="#222">a</text><text x="6" y="11" fontSize="12" fontWeight="700" fill="#222">a</text></svg>
            <Drop w={57} label="消除锯齿">平滑</Drop>
          </Group>
        </Row>
      </CharBody>
    </Panel>
  )
}

function LayersPanel() {
  return (
    <Panel split tabs={['图层', '通道', '路径']} initial="图层">
      <LayerBody>
        <LayerOptions h={19}>
          <Drop w={117} label="混合模式">正常</Drop>
          <label htmlFor="opacity">不透明度:</label>
          <TextBox id="opacity" $w={32} $h={16} defaultValue="100%" />
          <Stepper aria-label="不透明度" />
        </LayerOptions>
        <LayerOptions h={24}>
          锁定:
          <Group ml={6} gap={4}>
            <Icon name="checker" size={11} />
            <Icon name="brush" size={11} />
            <Icon name="moveAll" size={11} />
            <Icon name="lockDark" size={11} />
          </Group>
          <label htmlFor="fill">填充:</label>
          <TextBox id="fill" $w={32} $h={16} defaultValue="100%" />
          <Stepper aria-label="填充" />
        </LayerOptions>
        <LayerList>
          <div>
            <LayerRow $selected>
              <EyeCell aria-label="可见性"><Icon name="eye" size={13} /></EyeCell>
              <LayerColor />
              <Icon name="chain" size={11} />
              <MaskThumb />
              形状 1
            </LayerRow>
            <LayerRow>
              <LockCell><Icon name="lock" size={12} /></LockCell>
            </LayerRow>
          </div>
          <ScrollBar />
        </LayerList>
        <PanelFoot h={20} gap={10} pr={16}>
          <IconButton w={13} h={14} aria-label="链接图层"><Icon name="links" size={11} /></IconButton>
          <IconButton w={13} h={14} aria-label="图层样式"><b><i>fx.</i></b></IconButton>
          <IconButton w={13} h={14} aria-label="图层蒙版"><Icon name="mask" size={11} /></IconButton>
          <IconButton w={13} h={14} aria-label="调整图层"><Icon name="fillLayer" size={11} /></IconButton>
          <IconButton w={13} h={14} aria-label="新建组"><Icon name="folder" size={11} /></IconButton>
          <IconButton w={13} h={14} aria-label="新建图层"><Icon name="page" size={11} /></IconButton>
          <IconButton w={13} h={14} aria-label="删除图层"><Icon name="trash" size={11} /></IconButton>
        </PanelFoot>
      </LayerBody>
    </Panel>
  )
}

export default function App() {
  return (
    <>
      <GlobalStyle />
      <Defs />
      <Window>
        <TopMenu />
        <Options />
        <Workspace>
          <Tools />
          <DocumentView />
          <Dock>
            <DarkHead right><svg width="8" height="6"><path d="M0 0l3 3-3 3zM4 0l3 3-3 3z" fill="#fff" /></svg></DarkHead>
            <HistoryPanel />
            <CharacterPanel />
            <LayersPanel />
          </Dock>
        </Workspace>
        <Badge>
          <svg width="36" height="38" viewBox="0 0 36 38" fill="none" stroke="#d3d7e0" strokeWidth="2.600" strokeLinecap="round" strokeLinejoin="round">
            <path d="M3 6v22c0 6 5 9 10 6l18-11c4-3 4-6 0-9L17 5c-4-3-9-1-9 3v20c0 3 3 3 6 1" />
            <path d="M14 15l6 4-6 4z" fill="#d3d7e0" strokeWidth="1" />
            <path d="M23.500 16v6" strokeWidth="2" />
          </svg>
          <div>
            <BadgeName>溜溜自学</BadgeName>
            <BadgeUrl>zixue.3D66.COM</BadgeUrl>
          </div>
        </Badge>
      </Window>
    </>
  )
}
